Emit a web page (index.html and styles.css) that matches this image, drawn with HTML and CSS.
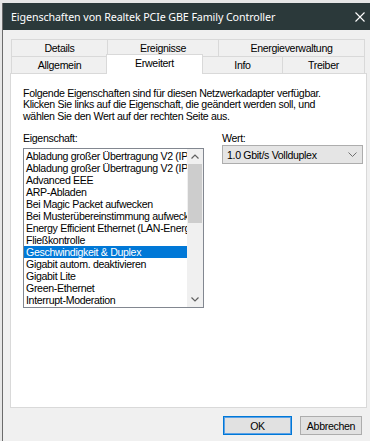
FILE: index.html
```html
<!DOCTYPE html>
<html lang="de">
<head>
<meta charset="UTF-8">
<meta name="viewport" content="width=device-width, initial-scale=1.0">
<title>Eigenschaften von Realtek PCIe GBE Family Controller</title>
<link rel="stylesheet" href="styles.css">
</head>
<body>

<div class="dialog">
  <div class="titlebar">
    <span class="title">Eigenschaften von Realtek PCIe GBE Family Controller</span>
    <svg class="close" width="10" height="10" viewBox="0 0 10 10">
      <path d="M0.5 0.5 L9.5 9.5 M9.5 0.5 L0.5 9.5" stroke="#fff" stroke-width="1.1" fill="none"/>
    </svg>
  </div>

  <div class="content">
    <div class="tabs">
      <div class="tab-row">
        <div class="tab w-details">Details</div>
        <div class="tab w-events">Ereignisse</div>
        <div class="tab w-power last">Energieverwaltung</div>
      </div>
      <div class="tab-row">
        <div class="tab w-general">Allgemein</div>
        <div class="tab w-advanced active">Erweitert</div>
        <div class="tab w-info">Info</div>
        <div class="tab w-driver last">Treiber</div>
      </div>
    </div>

    <div class="panel">
      <p class="intro">Folgende Eigenschaften sind für diesen Netzwerkadapter verfügbar.<br>
        Klicken Sie links auf die Eigenschaft, die geändert werden soll, und<br>
        wählen Sie den Wert auf der rechten Seite aus.</p>

      <div class="fields">
        <div class="col-prop">
          <div class="label">Eigenschaft:</div>
          <div class="listbox">
            <ul class="items">
              <li>Abladung großer Übertragung V2 (IPv4)</li>
              <li>Abladung großer Übertragung V2 (IPv6)</li>
              <li>Advanced EEE</li>
              <li>ARP-Abladen</li>
              <li>Bei Magic Packet aufwecken</li>
              <li>Bei Musterübereinstimmung aufwecken</li>
              <li>Energy Efficient Ethernet (LAN-Energiesparmodus)</li>
              <li>Fließkontrolle</li>
              <li class="selected">Geschwindigkeit &amp; Duplex</li>
              <li>Gigabit autom. deaktivieren</li>
              <li>Gigabit Lite</li>
              <li>Green-Ethernet</li>
              <li>Interrupt-Moderation</li>
            </ul>
            <div class="scrollbar">
              <div class="arrow">
                <svg width="8" height="5" viewBox="0 0 8 5"><path d="M0.5 4.5 L4 1 L7.5 4.5" stroke="#606060" stroke-width="1.2" fill="none"/></svg>
              </div>
              <div class="track">
                <div class="thumb"></div>
              </div>
              <div class="arrow">
                <svg width="8" height="5" viewBox="0 0 8 5"><path d="M0.5 0.5 L4 4 L7.5 0.5" stroke="#606060" stroke-width="1.2" fill="none"/></svg>
              </div>
            </div>
          </div>
        </div>

        <div class="col-value">
          <div class="label">Wert:</div>
          <div class="combo">
            <span>1.0 Gbit/s Vollduplex</span>
            <svg width="9" height="5" viewBox="0 0 9 5"><path d="M0.5 0.5 L4.5 4.5 L8.5 0.5" stroke="#707070" stroke-width="1" fill="none"/></svg>
          </div>
        </div>
      </div>
    </div>

    <div class="buttons">
      <button class="btn default">OK</button>
      <button class="btn">Abbrechen</button>
    </div>
  </div>
</div>

</body>
</html>
```

FILE: styles.css
```css
body {
  margin: 0;
  padding: 3px 0 0 2px;
  background: #e6e6e6;
  font-family: 'Liberation Sans', Arial, sans-serif;
  font-size: 10.6px;
  letter-spacing: -0.33px;
  color: #000;
  height: 441px;
  box-sizing: border-box;
  overflow: hidden;
}

.dialog {
  background: #f0f0f0;
  border-left: 1px solid #6b6b6b;
  height: 100%;
}

/* Title bar */
.titlebar {
  height: 27px;
  background: #2b393a;
  display: flex;
  align-items: center;
  justify-content: space-between;
  padding: 0 5px 0 8px;
}

.title {
  color: #fff;
  font-family: 'Noto Sans', 'Open Sans', sans-serif;
  font-size: 10.7px;
  letter-spacing: -0.1px;
}

/* Tabs */
.content {
  padding: 9px 0 0 7px;
}

.tabs {
  margin-left: 1px;
  position: relative;
  z-index: 1;
}

.tab-row {
  display: flex;
  align-items: flex-end;
}

.tab {
  height: 16px;
  line-height: 16px;
  text-align: center;
  border-top: 1px solid #d9d9d9;
  border-left: 1px solid #d9d9d9;
  background: #f0f0f0;
}

.tab.last { border-right: 1px solid #d9d9d9; }

.w-details { width: 95px; }
.w-events { width: 110px; }
.w-power { width: 145px; }
.w-general { width: 95px; }
.w-advanced { width: 94px; }
.w-info { width: 79px; }
.w-driver { width: 81px; }

.tab.active {
  background: #fff;
  height: 19px;
  line-height: 16px;
  margin-top: -2px;
  margin-bottom: -1px;
  margin-left: -1px;
  margin-right: -1px;
  width: 95px;
  border-right: 1px solid #d9d9d9;
  position: relative;
}

/* Panel */
.panel {
  width: 357px;
  height: 335px;
  background: #fff;
  border: 1px solid #d9d9d9;
  padding: 14px 0 0 12px;
  box-sizing: border-box;
}

.intro {
  margin: 0;
  line-height: 11.4px;
  white-space: nowrap;
}

.fields {
  display: flex;
  margin-top: 10px;
}

.label {
  line-height: 12px;
  height: 12px;
}

.col-prop { width: 181px; }

.col-value {
  width: 141px;
  margin-left: 18px;
}

/* Listbox */
.listbox {
  margin-top: 4px;
  height: 160px;
  border: 1px solid #828790;
  box-sizing: border-box;
  display: flex;
  background: #fff;
}

.items {
  list-style: none;
  margin: 0;
  padding: 1px 0 0 0;
  flex: 1;
  overflow: hidden;
}

.items li {
  height: 12px;
  line-height: 12px;
  padding-left: 2px;
  white-space: nowrap;
  overflow: hidden;
}

.items li.selected {
  background: #0078d7;
  color: #fff;
}

.scrollbar {
  width: 16px;
  background: #f0f0f0;
  display: flex;
  flex-direction: column;
}

.arrow {
  height: 15px;
  display: flex;
  align-items: center;
  justify-content: center;
}

.track { flex: 1; }

.thumb {
  height: 59px;
  margin: 0 1px;
  background: #cdcdcd;
}

/* Combobox */
.combo {
  margin-top: 1px;
  height: 19px;
  border: 1px solid #adadad;
  background: #e5e5e5;
  box-sizing: border-box;
  display: flex;
  align-items: center;
  justify-content: space-between;
  padding: 0 5px 0 4px;
}

/* Buttons */
.buttons {
  display: flex;
  justify-content: flex-end;
  gap: 8px;
  padding: 8px 5px 0 0;
  width: 357px;
  box-sizing: border-box;
}

.btn {
  font-family: 'Liberation Sans', Arial, sans-serif;
  font-size: 10.6px;
  letter-spacing: -0.33px;
  height: 19px;
  padding: 0;
  background: #e1e1e1;
  border: 1px solid #adadad;
  color: #000;
}

.btn.default {
  width: 69px;
  border-color: #0078d7;
  box-shadow: inset 0 0 0 1px #5da2e6;
}

.btn:not(.default) { width: 62px; }
```
